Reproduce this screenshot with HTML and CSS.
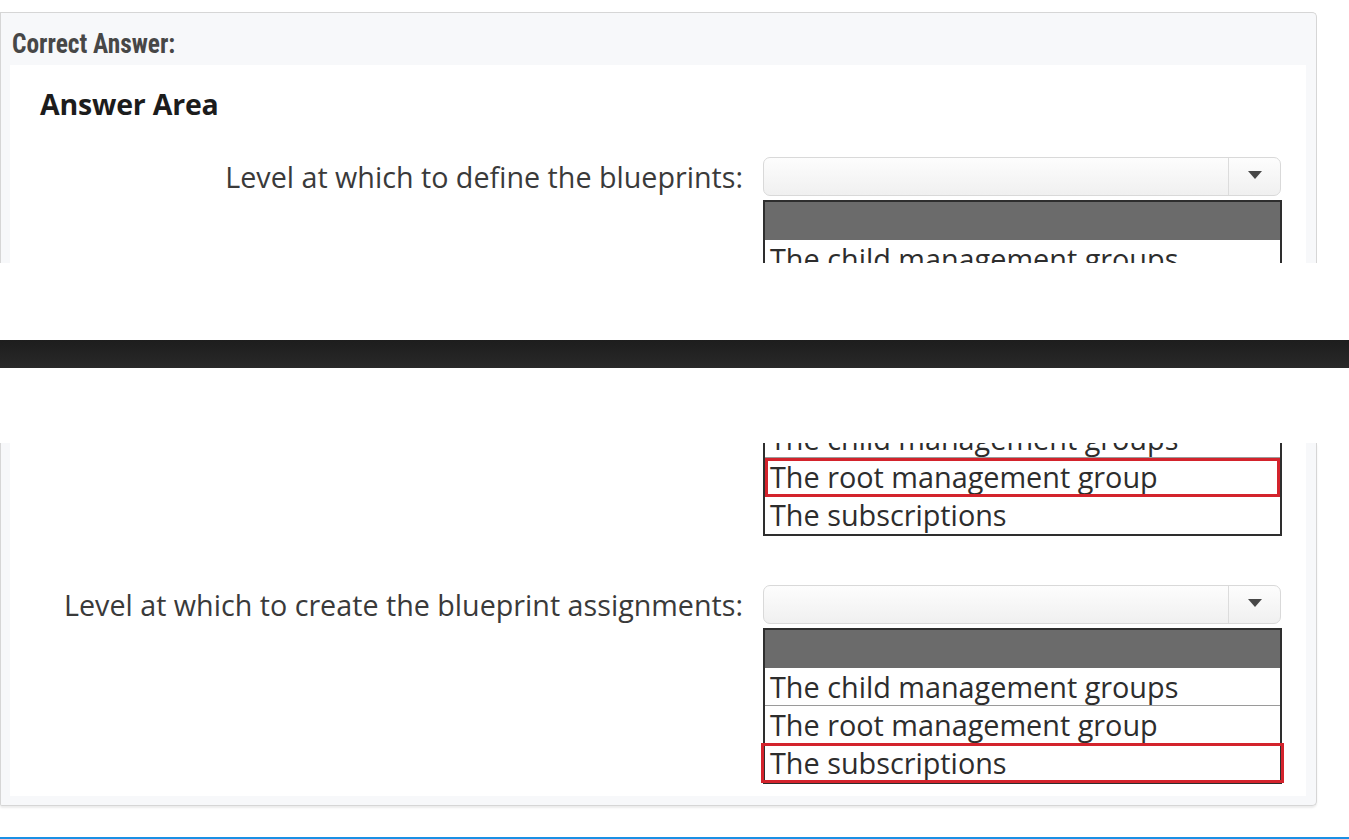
FILE: index.html
```html
<!DOCTYPE html>
<html lang="en">
<head>
<meta charset="utf-8">
<title>Correct Answer</title>
<link rel="stylesheet" href="styles.css">
</head>
<body>
<div class="frag frag-top">
  <div class="card-head"><span class="card-title">Correct Answer:</span></div>
  <div class="shot">
    <div class="area-title">Answer Area</div>
    <div class="q-row">
      <div class="q-label">Level at which to define the blueprints:</div>
      <div class="q-ctrl">
        <div class="dropdown"><span class="dd-field"></span><span class="dd-btn"><span class="dd-arrow"></span></span></div>
        <div class="list list-open">
          <div class="list-head"></div>
          <div class="list-item">The child management groups</div>
        </div>
      </div>
    </div>
  </div>
</div>

<div class="band"><div class="band-bar"></div></div>

<div class="frag frag-bottom">
  <div class="shot shot-bottom">
    <div class="q-row">
      <div class="q-label"></div>
      <div class="q-ctrl">
        <div class="list list-cont">
          <div class="list-item list-item-cut">The child management groups</div>
          <div class="list-item is-answer answer-a">The root management group</div>
          <div class="list-item list-item-last">The subscriptions</div>
        </div>
      </div>
    </div>
    <div class="q-row q-row-second">
      <div class="q-label">Level at which to create the blueprint assignments:</div>
      <div class="q-ctrl">
        <div class="dropdown"><span class="dd-field"></span><span class="dd-btn"><span class="dd-arrow"></span></span></div>
        <div class="list list-full">
          <div class="list-head"></div>
          <div class="list-item">The child management groups</div>
          <div class="list-item">The root management group</div>
          <div class="list-item list-item-last is-answer answer-b">The subscriptions</div>
        </div>
      </div>
    </div>
  </div>
</div>

<div class="blue-line"></div>
</body>
</html>
```

FILE: styles.css
```css
* { box-sizing: border-box; }

html, body {
  margin: 0;
  padding: 0;
  background: #ffffff;
}

body {
  width: 1349px;
  overflow: hidden;
}

.frag {
  width: 1317px;
  background: #f7f8fa;
  border: 1px solid #d6d6d6;
}

.frag-top {
  margin-top: 12px;
  height: 251px;
  border-bottom: 0;
  border-top-right-radius: 5px;
  overflow: hidden;
}

.frag-bottom {
  border-top: 0;
  border-bottom-right-radius: 5px;
  border-bottom-left-radius: 2px;
  padding: 0 10px 9px 9px;
  box-shadow: 0 2px 2px rgba(0, 0, 0, 0.08);
}

.card-head {
  height: 52px;
  padding-left: 11px;
  padding-top: 16px;
}

.card-title {
  display: inline-block;
  font-family: "Roboto Condensed", Roboto, "Liberation Sans", sans-serif;
  font-weight: 700;
  font-size: 27px;
  line-height: 30px;
  color: #474747;
  transform: scaleX(0.94);
  transform-origin: left center;
  white-space: nowrap;
}

.shot {
  margin: 0 10px 0 9px;
  background: #ffffff;
  font-family: "Open Sans", "Noto Sans", sans-serif;
}

.frag-top .shot {
  height: 198px;
  overflow: hidden;
}

.shot-bottom {
  margin: 0;
  padding-bottom: 12px;
}

.area-title {
  padding-top: 19px;
  padding-left: 30px;
  font-weight: 700;
  font-size: 28.5px;
  line-height: 40px;
  color: #1c1c1c;
  letter-spacing: -0.2px;
}

.q-row {
  display: grid;
  grid-template-columns: 733px 519px;
  column-gap: 20px;
  margin-top: 33px;
}

.shot-bottom .q-row {
  margin-top: 0;
}

.shot-bottom .q-row-second {
  margin-top: 49px;
}

.q-label {
  text-align: right;
  font-size: 28.7px;
  line-height: 39px;
  color: #3a3a3a;
  white-space: nowrap;
}

.dropdown {
  display: flex;
  height: 39px;
  width: 518px;
  border: 1px solid #d9d9d9;
  border-radius: 7px;
  background: linear-gradient(to bottom, #fdfdfd, #f0f0f0);
}

.dd-field {
  flex: 1;
}

.dd-btn {
  width: 52px;
  border-left: 1px solid #dcdcdc;
  display: flex;
  align-items: center;
  justify-content: center;
}

.dd-arrow {
  width: 0;
  height: 0;
  border-left: 7px solid transparent;
  border-right: 7px solid transparent;
  border-top: 8px solid #474747;
  margin-top: -3px;
}

.list {
  width: 519px;
  border-left: 2px solid #2e2e2e;
  border-right: 2px solid #2e2e2e;
  background: #ffffff;
}

.list-open,
.list-full {
  margin-top: 4px;
  border-top: 2px solid #2e2e2e;
}

.list-cont,
.list-full {
  border-bottom: 2px solid #2e2e2e;
}

.list-cont {
  overflow: hidden;
}

.list-head {
  height: 38px;
  background: #6b6b6b;
}

.list-item {
  position: relative;
  height: 38px;
  border-bottom: 1px solid #9a9a9a;
  padding-left: 5px;
  font-size: 28.8px;
  line-height: 37px;
  color: #2d2d2d;
  white-space: nowrap;
}

.list-item-cut {
  margin-top: -23px;
}

.list-item-last {
  border-bottom: 0;
  height: 38px;
}

.is-answer::after {
  content: "";
  position: absolute;
  border: 3px solid #d3232c;
}

.answer-a::after {
  top: 0;
  bottom: -2px;
  left: 0;
  right: 0;
}

.answer-b::after {
  top: -1px;
  bottom: -1px;
  left: -4px;
  right: -4px;
}

.band {
  height: 180px;
  padding-top: 77px;
}

.band-bar {
  height: 28px;
  background: linear-gradient(to bottom, #1d1d1d, #292929);
}

.blue-line {
  margin-top: 31px;
  height: 6px;
  background: #1a90e4;
}
```
